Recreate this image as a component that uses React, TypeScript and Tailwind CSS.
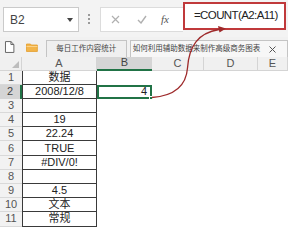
import React from "react";

const font = { fontFamily: '"Liberation Sans", "Noto Sans CJK SC", sans-serif' };

const rows: { n: number; v: string }[] = [
  { n: 1, v: "数据" },
  { n: 2, v: "2008/12/8" },
  { n: 3, v: "" },
  { n: 4, v: "19" },
  { n: 5, v: "22.24" },
  { n: 6, v: "TRUE" },
  { n: 7, v: "#DIV/0!" },
  { n: 8, v: "" },
  { n: 9, v: "4.5" },
  { n: 10, v: "文本" },
  { n: 11, v: "常规" },
];

const cols = ["A", "B", "C", "D", "E"];

export default function App() {
  return (
    <div className="relative w-[288px] h-[227px] overflow-hidden bg-white text-[#333]" style={font}>
      {/* formula bar */}
      <div className="flex h-[37px] bg-[#f3f3f3]">
        <div className="ml-[3px] mt-[7px] w-[76px] h-[25px] border border-[#cacaca] bg-white flex items-center justify-between pl-[6px] pr-[5px] text-[12px] text-[#444]">
          <span>B2</span>
          <span className="w-0 h-0 border-l-[3px] border-r-[3px] border-t-[4px] border-l-transparent border-r-transparent border-t-[#444]" />
        </div>
        <div className="ml-[9px] mt-[14px] flex flex-col gap-[2px]">
          <span className="w-[2px] h-[2px] bg-[#9a9a9a]" />
          <span className="w-[2px] h-[2px] bg-[#9a9a9a]" />
          <span className="w-[2px] h-[2px] bg-[#9a9a9a]" />
        </div>
        <div className="ml-[10px] mt-[7px] w-[83px] h-[25px] bg-white border border-[#dcdcdc] border-r-0 flex items-center">
          <svg className="ml-[10px]" width="9" height="9" viewBox="0 0 9 9">
            <path d="M1 1 L8 8 M8 1 L1 8" stroke="#b0b0b0" strokeWidth="1.2" />
          </svg>
          <svg className="ml-[17px]" width="10" height="9" viewBox="0 0 10 9">
            <path d="M1 5 L4 8 L9 1" stroke="#b0b0b0" strokeWidth="1.4" fill="none" />
          </svg>
          <span className="ml-[14px] text-[11px] italic text-[#555]" style={{ fontFamily: '"Liberation Serif", serif' }}>
            fx
          </span>
        </div>
        <div className="mt-[2px] w-[103px] h-[28px] border-2 border-[#c0393b] bg-white flex items-center pl-[9px] text-[11.5px] tracking-[-0.6px] text-[#222] whitespace-nowrap overflow-hidden">
          =COUNT(A2:A11)
        </div>
      </div>

      {/* workbook tabs */}
      <div className="flex h-[20px] items-end bg-[#f1f1f1]">
        <svg className="ml-[4px] mb-[4px]" width="11" height="12" viewBox="0 0 11 12">
          <path d="M1.5 0.5 H7 L10 3.5 V11.5 H1.5 Z M7 0.5 V3.5 H10" fill="#fff" stroke="#666" strokeWidth="1" />
        </svg>
        <svg className="ml-[11px] mb-[5px]" width="12" height="9" viewBox="0 0 12 9">
          <path d="M0.5 1 H4.5 L5.5 2 H11.5 V8.5 H0.5 Z" fill="#f3b54a" stroke="#e39d2b" strokeWidth="0.8" />
          <path d="M0.5 3.5 H11.5" stroke="#fbd28b" strokeWidth="1" />
        </svg>
        <div className="ml-[8px] w-[82px] h-[17px] border border-b-0 border-[#c4c4c4] bg-[#efefef] flex items-center justify-center text-[7.5px] text-[#444]">
          每日工作内容统计
        </div>
        <div className="ml-[3px] w-[160px] h-[17px] border border-b-0 border-[#c4c4c4] bg-[#f7f7f7] flex items-center pl-[2px] text-[7.5px] text-[#444] whitespace-nowrap">
          <span>如何利用辅助数据来制作高级商务图表</span>
          <svg className="ml-[9px]" width="7" height="7" viewBox="0 0 7 7">
            <path d="M0.5 0.5 L6.5 6.5 M6.5 0.5 L0.5 6.5" stroke="#555" strokeWidth="1" />
          </svg>
        </div>
      </div>

      {/* sheet grid */}
      <div className="grid grid-cols-[22px_75px_55px_52px_54px_1fr] grid-rows-[13.5px_repeat(11,14.2px)] text-[11px]">
        <div className="relative bg-[#f0f0f0] border-b border-r border-[#d4d4d4]">
          <span className="absolute right-[2px] bottom-[2px] w-0 h-0 border-b-[7px] border-l-[7px] border-b-[#bdbdbd] border-l-transparent" />
        </div>
        {cols.map((c) => (
          <div
            key={c}
            className={
              c === "B"
                ? "bg-[#d5d5d5] border-b-2 border-[#217346] flex items-center justify-center text-[#444] leading-none"
                : "bg-[#f0f0f0] border-b border-r border-[#d4d4d4] flex items-center justify-center text-[#555] leading-none"
            }
          >
            {c}
          </div>
        ))}
        {rows.map((r) => (
          <React.Fragment key={r.n}>
            <div
              className={
                r.n === 2
                  ? "bg-[#d5d5d5] border-r-2 border-[#217346] flex items-center justify-center text-[#444] leading-none"
                  : "bg-[#f2f2f2] border-b border-[#d9d9d9] flex items-center justify-center text-[#555] leading-none"
              }
            >
              {r.n}
            </div>
            <div className="border-b border-l border-r border-[#3a3a3a] flex items-center justify-center text-[#222] leading-none">
              {r.v}
            </div>
            {r.n === 2 ? (
              <div className="relative border-2 border-[#217346] flex items-center justify-end pr-[3px] text-[#222] leading-none">
                4
                <span className="absolute -right-[3px] -bottom-[3px] w-[4px] h-[4px] bg-[#217346] border border-white" />
              </div>
            ) : (
              <div />
            )}
            <div />
            <div />
            <div />
          </React.Fragment>
        ))}
      </div>

      {/* annotation arrow */}
      <svg className="absolute left-0 top-0 pointer-events-none" width="288" height="227" viewBox="0 0 288 227">
        <path d="M152 97.5 C172 96, 186 88, 187.5 68 C189 46, 198 33, 219 29.5" fill="none" stroke="#9e2a2b" strokeWidth="1.3" />
        <path d="M226 28.5 L218 26 L219.5 32.5 Z" fill="#9e2a2b" />
      </svg>
    </div>
  );
}
